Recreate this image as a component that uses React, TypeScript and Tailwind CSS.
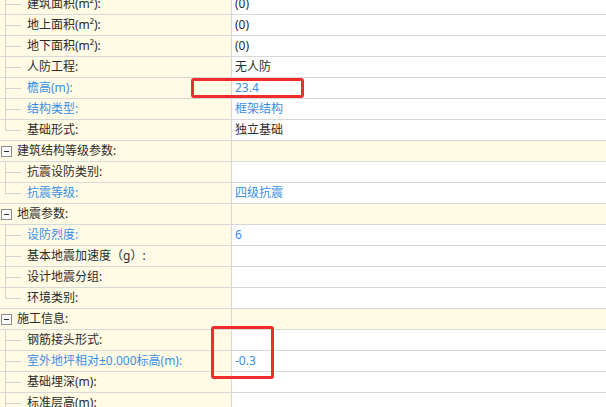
import React from 'react';

type Row =
  | { kind: 'group'; label: string }
  | { kind: 'item'; label: string; value?: string; blue?: boolean; last?: boolean };

const rows: Row[] = [
  { kind: 'item', label: '建筑面积(m²):', value: '(0)' },
  { kind: 'item', label: '地上面积(m²):', value: '(0)' },
  { kind: 'item', label: '地下面积(m²):', value: '(0)' },
  { kind: 'item', label: '人防工程:', value: '无人防' },
  { kind: 'item', label: '檐高(m):', value: '23.4', blue: true },
  { kind: 'item', label: '结构类型:', value: '框架结构', blue: true },
  { kind: 'item', label: '基础形式:', value: '独立基础', last: true },
  { kind: 'group', label: '建筑结构等级参数:' },
  { kind: 'item', label: '抗震设防类别:' },
  { kind: 'item', label: '抗震等级:', value: '四级抗震', blue: true, last: true },
  { kind: 'group', label: '地震参数:' },
  { kind: 'item', label: '设防烈度:', value: '6', blue: true },
  { kind: 'item', label: '基本地震加速度（g）:' },
  { kind: 'item', label: '设计地震分组:' },
  { kind: 'item', label: '环境类别:', last: true },
  { kind: 'group', label: '施工信息:' },
  { kind: 'item', label: '钢筋接头形式:' },
  { kind: 'item', label: '室外地坪相对±0.000标高(m):', value: '-0.3', blue: true },
  { kind: 'item', label: '基础埋深(m):' },
  { kind: 'item', label: '标准层高(m):' },
];

const TreeLine = ({ last }: { last?: boolean }) => (
  <div className="ml-[5px] w-[16px] self-stretch flex flex-col">
    <div className="flex-1 border-l border-b border-[#d4d4d4]" />
    <div className={`flex-1 ${last ? '' : 'border-l border-[#d4d4d4]'}`} />
  </div>
);

const App = () => {
  return (
    <div
      className="relative w-[606px] h-[407px] overflow-hidden bg-white text-[12px] text-[#2b2b2b]"
      style={{ fontFamily: '"Noto Sans", "Noto Sans CJK SC", sans-serif' }}
    >
      <div className="-mt-[6px]">
        {rows.map((row, i) =>
          row.kind === 'group' ? (
            <div key={i} className="flex h-[21px] border-b border-[#d8d8d8] bg-[#fffbe4]">
              <div className="w-[232px] shrink-0 flex items-center border-r border-[#d8d8d8]">
                <div className="ml-[1px] w-[11px] h-[11px] border border-[#8c8c8c] bg-white flex items-center justify-center">
                  <div className="w-[5px] h-px bg-[#333]" />
                </div>
                <span className="ml-[5px] leading-none">{row.label}</span>
              </div>
              <div className="flex-1" />
            </div>
          ) : (
            <div key={i} className="flex h-[21px] border-b border-[#d8d8d8]">
              <div className="w-[232px] shrink-0 flex items-center border-r border-[#d8d8d8] bg-[#fffbe4]">
                <TreeLine last={row.last} />
                <span className={`ml-[6px] leading-none whitespace-nowrap ${row.blue ? 'text-[#3a8ee6]' : ''}`}>
                  {row.label}
                </span>
              </div>
              <div className={`flex-1 flex items-center pl-[3px] leading-none ${row.blue ? 'text-[#3a8ee6]' : ''}`}>
                {row.value}
              </div>
            </div>
          )
        )}
      </div>

      {/* annotation boxes */}
      <div className="absolute left-[191px] top-[78px] w-[113px] h-[20px] border-[3px] border-[#f02c2c] rounded-[3px]" />
      <div className="absolute left-[211px] top-[326px] w-[63px] h-[53px] border-[3px] border-[#f02c2c] rounded-[3px]" />
    </div>
  );
};

export default App;
